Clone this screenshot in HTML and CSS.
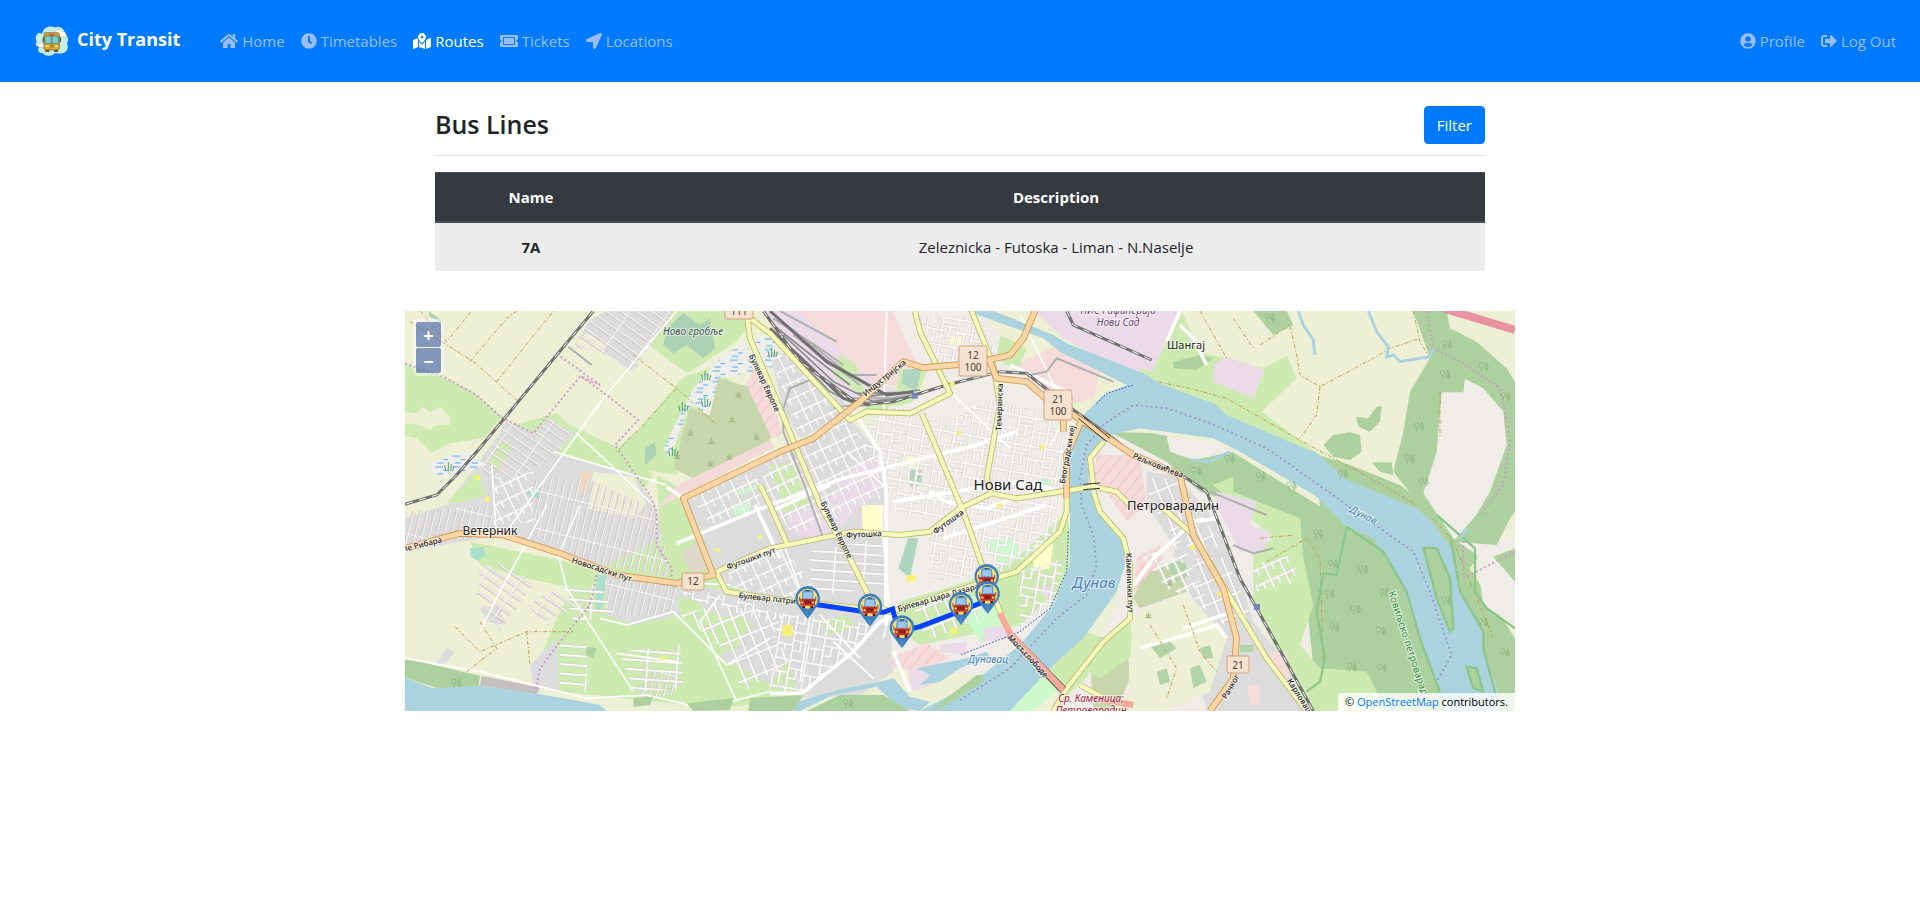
FILE: index.html
```html
<!DOCTYPE html>
<html lang="en">
<head>
<meta charset="utf-8">
<title>City Transit</title>
<link rel="stylesheet" href="styles.css">
</head>
<body>
<nav class="navbar">
  <a class="brand" href="#">
    <svg class="logo" viewBox="0 0 105 90" aria-hidden="true">
      <path fill="#c5ece5" d="M8 48C-1 28 14 14 24 24 28 4 46-2 62 4 76-2 92 8 92 22 104 32 104 44 99 52 106 66 98 80 84 82 72 84 66 80 62 82 54 92 34 92 26 82 12 82 8 66 18 62 6 62 2 56 8 48Z"/>
      <path fill="#fff" d="M62 20C64 8 80 6 84 16 94 16 98 24 97 32H64ZM10 60C8 54 20 48 28 54L34 64H16Z" stroke="#9a8578" stroke-width="1"/>
      <path fill="#5d5444" d="M26 34h4v14h-4zM77 34h4v14h-4zM34 68h12v10H34zM60 68h12v10H60z"/>
      <rect x="30" y="20" width="46" height="52" rx="5" fill="#d9a82f" stroke="#6b5a36" stroke-width="2"/>
      <path fill="#78cfd2" stroke="#55706b" stroke-width="2" d="M33 30h19v23H33zM54 30h19v23H54z"/>
      <path fill="#bf4a3c" d="M45 25h17v4H45z"/>
      <path fill="#f6dd73" d="M34 58h10v5H34zM62 58h10v5H62z"/>
      <path fill="#8c6a2b" d="M47 58h13v2H47zM47 62h13v2H47z"/>
    </svg>
    <span>City Transit</span>
  </a>
  <ul class="nav">
    <li><a class="nav-link" href="#"><svg class="icon wide" viewBox="0 0 576 512" aria-hidden="true"><path d="M280.37 148.26L96 300.11V464a16 16 0 0 0 16 16l112.06-.29a16 16 0 0 0 15.92-16V368a16 16 0 0 1 16-16h64a16 16 0 0 1 16 16v95.64a16 16 0 0 0 16 16.05L464 480a16 16 0 0 0 16-16V300L295.67 148.26a12.19 12.19 0 0 0-15.3 0zM571.6 251.47L488 182.56V44.05a12 12 0 0 0-12-12h-56a12 12 0 0 0-12 12v72.61L318.47 43a48 48 0 0 0-61 0L4.34 251.47a12 12 0 0 0-1.6 16.9l25.5 31A12 12 0 0 0 45.15 301l235.22-193.74a12.19 12.19 0 0 1 15.3 0L530.9 301a12 12 0 0 0 16.9-1.6l25.5-31a12 12 0 0 0-1.7-16.93z"/></svg>Home</a></li>
    <li><a class="nav-link" href="#"><svg class="icon" viewBox="0 0 512 512" aria-hidden="true"><path d="M256,8C119,8,8,119,8,256S119,504,256,504,504,393,504,256,393,8,256,8Zm92.49,313h0l-20,25a16,16,0,0,1-22.49,2.5h0l-67-49.72a40,40,0,0,1-15-31.23V112a16,16,0,0,1,16-16h32a16,16,0,0,1,16,16V256l58,42.5A16,16,0,0,1,348.49,321Z"/></svg>Timetables</a></li>
    <li><a class="nav-link active" href="#" aria-current="page"><svg class="icon wide" viewBox="0 0 576 512" aria-hidden="true"><path d="M288 0c-69.59 0-126 56.41-126 126 0 56.26 82.35 158.8 113.9 196.02 6.39 7.54 17.82 7.54 24.2 0C331.65 284.8 414 182.26 414 126 414 56.41 357.59 0 288 0zm0 168c-23.2 0-42-18.8-42-42s18.8-42 42-42 42 18.8 42 42-18.8 42-42 42zM20.12 215.95A32.006 32.006 0 0 0 0 245.66v250.32c0 11.32 11.43 19.06 21.94 14.86L160 448V214.92c-8.84-15.98-16.07-31.54-21.25-46.42L20.12 215.95zM288 359.67c-14.07 0-27.38-6.18-36.51-16.96-19.66-23.2-40.57-49.62-59.49-76.72v182l192 64V266c-18.92 27.09-39.82 53.52-59.49 76.72-9.13 10.77-22.44 16.95-36.51 16.95zm266.06-198.51L416 224v288l139.88-55.95A31.996 31.996 0 0 0 576 426.34V176.02c0-11.32-11.43-19.06-21.94-14.86z"/></svg>Routes</a></li>
    <li><a class="nav-link" href="#"><svg class="icon wide" viewBox="0 0 576 512" aria-hidden="true"><path d="M128 160h320v192H128V160zm400 96c0 26.51 21.49 48 48 48v96c0 26.51-21.49 48-48 48H48c-26.51 0-48-21.49-48-48v-96c26.51 0 48-21.49 48-48s-21.49-48-48-48v-96c0-26.51 21.49-48 48-48h480c26.51 0 48 21.49 48 48v96c-26.51 0-48 21.49-48 48zm-48-104c0-13.255-10.745-24-24-24H120c-13.255 0-24 10.745-24 24v208c0 13.255 10.745 24 24 24h336c13.255 0 24-10.745 24-24V152z"/></svg>Tickets</a></li>
    <li><a class="nav-link" href="#"><svg class="icon" viewBox="0 0 512 512" aria-hidden="true"><path d="M444.52 3.52L28.74 195.42c-47.97 22.39-31.98 92.75 19.19 92.75h175.91v175.91c0 51.17 70.36 67.17 92.75 19.19l191.9-415.78c15.99-38.39-25.59-79.97-63.97-63.97z"/></svg>Locations</a></li>
  </ul>
  <ul class="nav nav-end">
    <li><a class="nav-link" href="#"><svg class="icon" viewBox="0 0 496 512" aria-hidden="true"><path d="M248 8C111 8 0 119 0 256s111 248 248 248 248-111 248-248S385 8 248 8zm0 96c48.6 0 88 39.4 88 88s-39.4 88-88 88-88-39.4-88-88 39.4-88 88-88zm0 344c-58.7 0-111.3-26.6-146.5-68.2 18.8-35.4 55.6-59.8 98.5-59.8 2.4 0 4.8.4 7.1 1.1 13 4.2 26.6 6.9 40.9 6.9 14.3 0 28-2.7 40.9-6.9 2.3-.7 4.7-1.1 7.1-1.1 42.9 0 79.7 24.4 98.5 59.8C359.3 421.4 306.7 448 248 448z"/></svg>Profile</a></li>
    <li><a class="nav-link" href="#"><svg class="icon" viewBox="0 0 512 512" aria-hidden="true"><path d="M497 273L329 441c-15 15-41 4.5-41-17v-96H152c-13.3 0-24-10.7-24-24v-96c0-13.3 10.7-24 24-24h136V88c0-21.4 25.9-32 41-17l168 168c9.3 9.4 9.3 24.6 0 34zM192 436v-40c0-6.6-5.4-12-12-12H96c-17.7 0-32-14.3-32-32V160c0-17.7 14.3-32 32-32h84c6.6 0 12-5.4 12-12V76c0-6.6-5.4-12-12-12H96c-53 0-96 43-96 96v192c0 53 43 96 96 96h84c6.6 0 12-5.4 12-12z"/></svg>Log Out</a></li>
  </ul>
</nav>

<main class="container">
  <section class="lines">
    <header class="lines-head">
      <h1>Bus Lines</h1>
      <button class="btn" type="button">Filter</button>
    </header>
    <table class="table">
      <thead><tr><th class="col-name" scope="col">Name</th><th scope="col">Description</th></tr></thead>
      <tbody><tr><th scope="row">7A</th><td>Zeleznicka - Futoska - Liman - N.Naselje</td></tr></tbody>
    </table>
  </section>

  <section class="map" aria-label="Map">
    <svg class="map-canvas" viewBox="0 0 1110 400" preserveAspectRatio="xMidYMid slice">
      <defs>
        <pattern id="sA" width="21" height="110" patternUnits="userSpaceOnUse" patternTransform="rotate(14)"><path class="sc" d="M0 0H21M0 0V110M21 0V110"/><path class="st" d="M0 0H21M0 0V110"/></pattern>
        <pattern id="sB" width="26" height="96" patternUnits="userSpaceOnUse" patternTransform="rotate(-55)"><path class="sc" d="M0 0H26M0 0V96M26 0V96"/><path class="st" d="M0 0H26M0 0V96"/></pattern>
        <pattern id="sC" width="48" height="44" patternUnits="userSpaceOnUse" patternTransform="rotate(-25)"><path class="sc" d="M0 4H48M4 0V44M26 0V22"/><path class="st" d="M0 4H48M4 0V44M26 0V22"/></pattern>
        <pattern id="sD" width="90" height="28" patternUnits="userSpaceOnUse" patternTransform="rotate(4)"><path class="sc" d="M0 5H90M5 0V28"/><path class="st" d="M0 5H90M5 0V28"/></pattern>
        <pattern id="sE" width="92" height="84" patternUnits="userSpaceOnUse" patternTransform="rotate(10)"><path class="sc" d="M0 5H92M5 0V84M5 44H50M50 5V84M50 30H92M74 30V60H50M26 44V84"/><path class="st" d="M0 5H92M5 0V84M5 44H50M50 5V84M50 30H92M74 30V60H50M26 44V84"/></pattern>
        <pattern id="sF" width="62" height="34" patternUnits="userSpaceOnUse" patternTransform="rotate(68)"><path class="sc" d="M0 5H62M5 0V34"/><path class="st" d="M0 5H62M5 0V34"/></pattern>
        <pattern id="marsh" width="52" height="32" patternUnits="userSpaceOnUse"><path d="M2 6h22M26 16h14M8 26h18" fill="none" stroke="#4aa8f0" stroke-width="3"/></pattern>
        <pattern id="hatch" width="26" height="26" patternUnits="userSpaceOnUse" patternTransform="rotate(40)"><path d="M0 0V26" stroke="#f3aaaa" stroke-width="3"/></pattern>
        <g id="tree" fill="none" stroke="#86b07c" stroke-width="2"><path d="M-8 14V2M8 14V-6M2 6 8-14 14 6Z"/><circle cx="-8" cy="-5" r="7"/></g>
        <g id="shrub" fill="none" stroke="#a3b07f" stroke-width="3"><path d="M-10 8H10M0 8V-8M0 8-7-2M0 8 7-2"/></g>
        <g id="reed" fill="none" stroke="#4c9f6a" stroke-width="3"><path d="M-10 14-14-4M-3 14V-14M4 14 6-8M10 14 14-2"/></g>
        <g id="pin">
          <path fill="#3d7fc1" d="M0 0-31-42A37 37 0 1 1 31-42Z"/>
          <path d="M0-22V-4" stroke="#9cc6ea" stroke-width="2" stroke-dasharray="4 4"/>
          <circle cy="-61" r="30" fill="#ffdc6b"/>
          <path d="M-24-66v12M24-66v12" stroke="#4d5b69" stroke-width="3"/>
          <path fill="#6d1d1a" d="M-16-40h8v8h-8zM8-40h8v8H8z"/>
          <path fill="#5b9bd8" d="M-18-60-16-84Q0-92 16-84L18-60Z"/>
          <path fill="#9cc8ef" d="M-14-62-12-80H12L14-62Z"/>
          <path fill="#4d5b69" d="M-6-87H6v4H-6z"/>
          <path fill="#c4342b" d="M-22-60H22V-40H-22Z"/>
          <path fill="#8d211c" d="M-10-56H10V-45H-10Z"/>
          <path d="M-19-49h6M13-49h6" stroke="#ffe37a" stroke-width="5"/>
        </g>
      </defs>
      <rect width="1110" height="400" fill="#eef0d5"/>
      <g transform="translate(-5 -6) scale(.33333)">
        <!-- land cover -->
        <g>
          <path class="grass" d="M15 178 100 205 220 262 310 335 250 400 150 415 95 445 50 400 15 392Z"/>
          <path class="farm" d="M15 320 50 325 70 305 90 322 120 305 150 335V360H110L90 375 50 358H15Z"/>
          <path class="grass" d="M820 18H1030L1050 60 1010 110 860 205 745 120Z"/>
          <path fill="#add1b5" d="M85 18 125 45V52L90 36Z"/>
          <path class="grass" d="M930 190 1000 230 900 330 830 510 700 490 640 440 720 370 780 280 850 215ZM450 330 470 325 620 455 560 450Z"/>
          <path class="grass" d="M300 370 450 330 700 450 760 510 700 600 500 480Z"/>
          <path class="city" d="M570 45 620 18H820L700 205 620 150 520 125Z"/>
          <path class="farm" d="M560 85 620 120 575 185 505 125ZM800 18 745 120 860 205 930 190 850 215 720 370 700 300 620 260 700 190Z"/>
          <path class="city" d="M300 385 320 345 405 385 445 340 525 385 465 445 700 512 765 600 820 830 600 800 300 690 15 740V640L140 600 230 480Z"/>
          <path class="farm" d="M580 500 700 515 740 600 700 640 560 610Z"/>
          <path class="grass" d="M140 590 230 500 260 570 180 595ZM265 470 310 400 340 420 290 500ZM210 710 600 790 780 700 770 510 860 560 960 830 1110 890 1250 1080 1200 1180 960 1210 480 1160 410 1080 480 920 520 850 380 820 240 780Z"/>
          <path fill="#ddd8ca" d="M840 750 895 705 930 790 880 805Z"/>
          <path class="city" d="M390 1080 470 1000 480 1160 400 1145ZM820 830 1110 880 1200 1000 1110 1140 1050 1100 960 1060 1020 960 830 870ZM110 1075 140 1030 165 1040 130 1085ZM240 910 300 900 310 960 260 950ZM610 810 830 840 840 930 700 960 620 930Z"/>
          <path class="grass" d="M920 940 1020 930 1060 960 1000 1040 930 1010ZM830 880 880 880 960 960 940 1000 850 940Z"/>
          <path class="wood" d="M15 1060 240 1112 235 1145 120 1152 15 1118ZM560 1025 590 1030 580 1060 555 1050Z"/>
          <path fill="#c5c0c0" d="M245 1112 420 1148 410 1168 240 1142Z"/>
          <path class="marsh-base" d="M90 470 200 440 260 480 140 515 100 510ZM1040 110 1060 200 960 220 930 330 870 300 810 460 790 430 880 250 970 150ZM1070 90 1140 100 1130 190 1060 180Z"/>
          <path fill="url(#marsh)" d="M90 470 200 440 260 480 140 515 100 510ZM1040 110 1060 200 960 220 930 330 870 300 810 460 790 430 880 250 970 150ZM1070 90 1140 100 1130 190 1060 180Z"/>
          <path fill="#c8d7ab" d="M955 220 1045 245 1115 395 1090 430 900 530 820 490 870 310 930 330Z"/>
          <path fill="#add1b5" d="M800 70 850 25 900 60 930 40 945 130 910 160 860 120 820 145 790 120ZM735 430 765 410 770 450 735 480Z"/>
          <path fill="#f3d9d8" d="M835 540 1110 405 1125 425 860 565 770 610Z"/>
          <path fill="#aae0cb" d="M590 810H620L605 915H587ZM385 550 420 545V580L380 570ZM210 730 250 725 258 750 235 768 212 755ZM920 690 960 670 965 680 925 705Z"/>
          <path fill="#f5d7bb" d="M545 500 575 505 560 560 530 555Z"/>
          <path class="pink" d="M1040 240 1060 195 1110 240 1145 390 1115 400Z"/>
          <path fill="url(#hatch)" d="M1040 240 1060 195 1110 240 1145 390 1115 400Z"/>
          <path class="purple" d="M1090 18H1200L1420 230 1560 280 1540 300 1400 300 1250 210Z"/>
          <path class="pink" d="M1200 18H1545L1590 200 1520 250 1420 230Z"/>
          <path class="pale" d="M1480 18H1740L2010 330 1990 1100 1560 1110 1400 1000 1350 420 1580 250Z"/>
          <path class="city" d="M860 590 1140 430 1350 340 1460 470V800L1480 1100 1380 1170 1200 1180 1110 880 960 830Z"/>
          <path class="city" d="M1110 140 1200 150 1360 320 1200 400 1150 320Z"/>
          <path class="grass" d="M1110 480 1180 470 1240 600 1150 620ZM1320 150 1370 180 1400 280 1300 210ZM1500 190 1580 200 1560 250 1490 260ZM1370 340 1540 290 1560 260 1400 300ZM1260 950 1340 930 1370 970 1290 990Z"/>
          <path fill="#cdfacd" d="M990 600 1050 585 1050 625 1000 630ZM1000 565 1070 538 1075 550 1010 575Z"/>
          <path class="purple" d="M1370 480 1440 460V560L1370 610 1290 700 1180 690 1160 630 1280 590Z"/>
          <path class="pale" d="M1470 590 1900 500 2000 620 1960 800 1850 900 1500 920 1470 800Z"/>
          <path class="grass" d="M1500 890 1700 830 1850 760 2000 620 2015 700 1980 850 1860 960 1560 1020 1480 960Z"/>
          <path fill="#cdfacd" d="M1660 880 1780 870 1830 980 1740 1010 1690 930ZM1870 1110 1950 1060 1990 1140 1900 1218H1830ZM1750 710 1850 700 1860 760 1800 780ZM1910 525 1950 520 1955 545 1920 550Z"/>
          <path class="purple" d="M1750 970 1820 960 1820 1000 1750 1010ZM1620 1020 1700 1010V1050L1620 1040ZM1520 1090 1650 1070 1620 1130 1540 1160ZM1910 850 1980 840 1960 900Z"/>
          <path class="pink" d="M1470 1060 1580 1015 1650 1060 1560 1095 1480 1085Z"/>
          <path fill="url(#hatch)" d="M1470 1060 1580 1015 1650 1060 1560 1095 1480 1085Z"/>
          <path fill="#afd5be" d="M1525 698 1555 700 1530 820 1495 790ZM1530 495 1565 495V540L1530 545ZM1510 195 1565 190 1550 260 1505 235Z"/>
          <path fill="#ffffcc" d="M1385 600H1450V680L1390 700ZM1520 455H1570V480H1520ZM1650 95H1690V120H1650ZM1900 720 1960 710 1950 790 1900 800Z"/>
        </g>
        <!-- east side -->
        <path class="purple" d="M1900 18H2345L2255 210 2120 170 1990 100Z"/>
        <path class="grass" d="M2345 18 2255 200 2220 190V240L2400 300 2700 460 2760 450 2585 320 2690 220 2660 150 2590 190 2470 160 2400 140Z"/>
        <path class="wood" d="M2560 18H2660L2680 60 2620 90ZM2320 170 2400 150 2440 160 2390 195 2320 190Z"/>
        <path class="purple" d="M2440 180 2480 155 2595 195 2560 280 2440 230Z"/>
        <path class="pink" d="M1850 180 1990 110 2100 200 2080 280 2000 300 1890 230Z"/>
        <path class="grass" d="M1800 90 1880 130 1850 200 1790 160Z"/>
        <path class="wood" d="M2868 335 2905 340 2930 305 2945 303 2940 350 2910 380 2875 365ZM2770 420 2800 390 2850 382 2880 390 2885 440 2850 465 2800 455ZM2915 472H2975L2980 510 2940 500Z"/>
        <path class="wood" d="M3040 18H3140L3150 70 3230 110 3320 190 3345 230V620L3200 800 3060 600 2980 500 3010 380 3030 260 3090 160Z"/>
        <path class="wood" d="M2740 445 2850 480 3000 540 3080 600 3150 700 3345 1000V1218H2760L2750 1080 2770 680Z"/>
        <path class="pale" d="M3125 262H3190L3195 222 3250 250 3310 320 3320 420 3270 560 3200 680 3345 700V960L3250 900 3230 750 3160 700 3070 565 3110 440Z"/>
        <path class="wood" d="M3280 755 3345 730V830ZM3255 600 3345 500V610L3290 720 3160 710Z"/>
        <path class="pale" d="M2090 400 2300 380 2450 600 2740 700 2720 1218H1990L2150 900 2170 760 2060 560Z"/>
        <path class="wood" d="M2130 380 2260 385 2480 430 2560 480 2850 660 2840 700 2820 810 2770 800 2760 900 2780 1080 2740 1080 2720 900 2650 640 2400 560 2300 470Z"/>
        <path class="pale" d="M2300 395 2450 410 2500 440 2380 465 2310 440Z"/>
        <path class="grass" d="M2440 540 2500 515V560L2700 640 2710 760 2740 900 2700 1020 2760 1090 2900 1100 2960 1218H2720L2560 900 2560 740 2620 700Z"/>
        <path class="purple" d="M2450 560 2570 590 2550 660 2610 680 2590 740 2520 740 2450 600Z"/>
        <path class="city" d="M2240 500 2330 510 2440 640 2500 760 2560 950 2650 1060 2720 1218H2420L2340 860 2320 720 2240 600Z"/>
        <path fill="#c8d7ab" d="M2200 880 2240 790 2350 780 2360 860 2220 910ZM2070 1060 2180 1000 2190 1120 2150 1218H2080Z"/>
        <path class="grass" d="M2120 1000 2190 930 2200 1050 2100 1120 2050 1090Z"/>
        <path class="farm" d="M2200 930 2360 860 2480 1000 2430 1160 2300 1218H2180Z"/>
        <path fill="#b2d4a8" d="M2300 780 2350 765 2370 810 2330 830ZM2250 1020 2300 1000 2330 1030 2280 1060ZM2370 1090 2400 1080 2420 1130 2380 1150ZM2520 1020 2560 1020V1040H2520ZM2270 1100 2300 1090 2310 1130 2280 1140ZM2400 1030 2430 1020 2440 1060 2410 1060Z"/>
        <path class="pink" d="M2090 450 2220 450 2240 600 2180 650 2120 560 2080 520ZM2210 760 2280 720 2290 760 2200 860Z"/>
        <path fill="url(#hatch)" d="M2090 450 2220 450 2240 600 2180 650 2120 560 2080 520ZM2210 760 2280 720 2290 760 2200 860Z"/>
        <path fill="#f5dcdb" d="M2610 1040 2660 1040 2670 1120 2620 1100ZM2540 1140H2580V1200H2550Z"/>
        <path class="grass" d="M2020 640 2010 800 1960 940 2050 980 2120 1000 2060 1120 1990 1180 1900 1080Z"/>

        <!-- street grids -->
        <path fill="url(#sB)" d="M570 45 620 18H820L700 205 620 150 520 125ZM320 345 405 385 445 340 525 385 460 460 320 540 240 500ZM240 780 340 780 400 840 300 980 230 880ZM380 900 470 850 560 900 430 950Z"/>
        <path fill="url(#sA)" d="M400 520 560 520 760 610 820 820 600 780 400 690ZM615 820 830 840 820 930 620 930ZM15 620 290 600 290 690 15 730ZM720 1110 830 1090 830 1170 720 1180Z"/>
        <path fill="url(#sC)" d="M280 520 400 500 400 650 280 660ZM1110 430 1150 420 1340 350 1460 480 1440 590 1180 690 1080 560ZM1110 150 1200 150 1350 310 1200 400ZM980 780 1140 720 1250 850 1180 880 1000 850ZM2230 760 2340 700 2430 900 2300 850ZM2560 780 2680 750 2700 830 2570 860ZM870 570 1060 500 1110 600 930 660Z"/>
        <path fill="url(#sD)" d="M480 1010H560V1160H480ZM1230 740 1450 700 1460 850 1230 870ZM490 840 600 840 640 930 520 950ZM660 1040 840 1020 850 1150 700 1160Z"/>
        <path fill="url(#sE)" d="M1480 300 1640 350 1770 280 1960 330 2000 420 1980 600 1800 640 1500 640 1400 420 1400 340ZM1560 40 1740 30 1790 150 1590 190ZM1120 920 1440 960 1220 1160 1110 1160ZM1580 700 1750 620 1960 600 1980 700 1800 800 1600 830ZM1860 800 1990 760 1960 920 1860 980ZM830 840 1100 900 1110 950 860 880Z"/>
        <path fill="url(#sF)" d="M950 900 1150 930 1110 1000 1180 1060 1030 1160 960 1020 840 930ZM1540 900 1720 840 1780 920 1580 1010ZM2240 520 2340 520 2460 720 2400 760 2320 690 2250 600ZM2370 760 2480 760 2560 950 2500 980 2400 900Z"/>
        <path class="st" d="M830 18 610 280 320 680M530 385 760 600M460 440 800 540M275 480 290 700M440 600 300 860 240 980M540 600 475 750 500 850 700 1160M15 1060 240 1100 560 1180 740 1170 910 1210 1110 1160M830 1070 650 1045M600 940 680 960 820 920 980 1080 1110 1000M1440 600 1470 920 1450 1000M1340 440 1460 550M1450 350 1460 18M1640 250 1830 430M1860 30 1990 300M1990 350 1950 420M1155 725 1230 940 1200 1130M1260 930 1380 1060M1300 1010 1420 1120M990 840 820 830M960 870 900 950 1010 1190"/>
        <path class="road" d="M830 715 1060 620 1110 600 1330 520 1730 420 1850 380M1630 700 1940 600M1200 1170 1360 1040 1440 950 1478 935M1830 180 2020 270M2340 18 2300 110M1458 960V550L1440 440 1355 310M1065 600 1140 760M2180 870 2260 760 2380 650 2450 640M2220 1030 2390 980 2450 960 2480 1000M1590 560 1640 590 1760 610 1900 560M1110 620 1290 540M1480 590 1850 530 1975 560M1480 1040 1530 1160M2420 180 2380 100 2340 60M2350 970 2500 920M800 545 850 580M1110 1165H1200"/>
        <!-- forest lanes and footpaths -->
        <path class="track" d="M30 50 220 170 350 285M60 18 140 110 215 18M210 170 320 40 350 18M290 230 460 18M700 150 830 250 720 370 650 440M830 250 950 360M165 965 240 1040 380 980 520 980M380 980 390 1080M200 1100 290 1030 240 950M2220 220 2370 250 2480 280 2690 400 2930 530 3050 600M2400 18 2480 160M2500 40 2560 130M2580 120 2670 60 2690 150 2700 210 2760 245 2920 160 2970 130 3060 100M2760 245 2750 330 2700 400M3040 18 3060 110 3090 160M3120 260V400M2600 770 2720 700 2760 760 2770 1080M3100 640 3160 710 3280 1000M2580 700 2680 690M2250 960 2330 1090 2300 1180M2350 900 2400 1040 2450 1100"/>
        <path class="boundary" d="M15 175 130 215 230 270 300 335 400 385 540 215 600 240 475 150M545 215 620 270 715 345 645 420 700 500 750 570 770 620 770 720 815 790 815 835 700 825M590 810 570 900 480 1010 420 1090 395 1210M15 1215H170"/>
        <g transform="translate(2220)"><path class="boundary" d="M860 18 880 130 980 180 1080 250 1110 400 1090 540 1020 630"/></g>
        <g transform="translate(2220 600)"><path class="boundary" d="M970 80V220L1125 140"/></g>

        <!-- water -->
        <path class="water" d="M1700 18H1780L1960 90 2000 115 2230 205 2290 240 2440 295 2480 330 2750 445 2840 525 3050 610 3100 655 3160 740 3180 860 3250 980 3250 1030 3295 1160V1218H3135L3120 1170 3060 1000 3010 850 2920 700 2840 665 2750 575 2520 440 2440 400 2220 370 2130 390 2070 450 2065 530 2090 610 2170 690 2175 780 2150 860 2050 1000 1960 1080 1830 1218H1560L1710 1140 1860 1020 1960 900 2010 780 2010 600 2000 520 2010 410 2050 330 2110 270 2180 240 1980 140 1930 100Z"/>
        <path class="water" d="M15 1118 100 1150 240 1142 420 1168 520 1185 600 1200 620 1218H15ZM1110 1215 1260 1170 1340 1150 1440 1130 1480 1120 1530 1175 1590 1190 1560 1218 1500 1210 1430 1145 1300 1170 1200 1218ZM1550 1090 1700 1060 1760 1040 1770 1060 1680 1090 1620 1130 1560 1140 1590 1110Z"/>
        <path class="wood" d="M1220 1218 1320 1170 1450 1170 1530 1218ZM1590 1218 1730 1110 1750 1110 1750 1130 1640 1200ZM700 1180 760 1175 750 1200 700 1205ZM860 1195 1000 1180 990 1215 880 1218ZM1050 1180 1210 1170 1180 1218H1045Z"/>
        <path d="M2840 665 2810 810 2770 805 2750 920 2775 1060 2760 1130 2720 1160M2840 665 2950 740 3020 860 3060 1000 3140 1218M3345 970 3260 910 3225 860V730L3110 630M3150 690 3180 860 3250 980V1030L3300 1218" fill="none" stroke="#8cc68a" stroke-width="7"/>
        <path d="M3070 728 3110 730 3150 820 3160 970 3150 980 3110 880ZM3200 1085 3230 1090 3250 1160 3220 1150Z" fill="#add19e" stroke="#8cc68a" stroke-width="7"/>
        <path class="stream" d="M2695 18 2710 60 2740 105 2745 150M2905 18 2930 80 2965 125 2960 155 2980 150 3000 170 3090 155 3100 130M2375 465 2430 470 2490 440M3180 700 3200 670"/>
        <path d="M1680 1185 1830 1090 1970 940 2060 870 2090 780 2080 690 2045 600 2040 520 2060 420 2110 360 2200 300 2300 310 2420 350 2600 430 2700 500 2840 600 3040 740 3090 860 3155 1050 3110 1130" class="ferry"/>
        <path d="M2090 295 2120 265 2200 240M2005 680 2000 800 1950 910 1860 980 1680 1050" fill="none" stroke="#3c46d8" stroke-width="3" stroke-dasharray="5 5"/>

        <!-- rail -->
        <g fill="none">
          <path stroke="#b0b0b0" stroke-width="6" d="M1120 40 1260 130 1330 180M1140 18 1310 110M1160 60 1350 210 1430 210M1180 90 1380 240M1300 310 1530 270M1350 280 1480 280M1230 225 1170 250 1150 310V380L1220 560 1270 700M1890 210 1940 200 1970 160 2140 230M2430 560 2600 630M2500 720 2560 745 2620 730M505 125 575 180"/>
          <path stroke="#8a8a8a" stroke-width="5" d="M1120 60 1220 140 1350 240M1150 90 1300 230 1420 290 1540 275M1130 100 1290 260 1360 295M1370 265 1540 262M1400 275 1560 255"/>
          <path class="rail" d="M580 18 470 150 330 320 230 440 170 510 110 570 15 598M1090 18 1200 170 1380 300 1480 290 1640 240 1800 200 1880 205 2000 300 2140 400 2200 450 2360 520 2420 560 2520 820 2620 1000 2740 1218M1110 70 1330 280 1410 300M1110 18 1280 170 1460 270 1540 260M2000 18 2020 60 2255 165"/>
          <path class="rail-dash" d="M580 18 470 150 330 320 230 440 170 510 110 570 15 598M1090 18 1200 170 1380 300 1480 290 1640 240 1800 200 1880 205 2000 300 2140 400 2200 450 2360 520 2420 560 2520 820 2620 1000 2740 1218M2000 18 2020 60 2255 165"/>
        </g>
        <!-- main roads -->
        <g fill="none" stroke-linejoin="round">
          <path stroke="#b5ba70" stroke-width="18" d="M1040 18 1050 100 1140 310 1260 600 1350 760 1420 900 1470 920M1050 40 1110 85 1350 345 1400 320 1530 325 1650 265 1560 80 1545 18M1565 325 1690 620 1760 820 1805 930M1715 18 1780 180 1800 300 1760 520 1775 565 1680 610 1590 680 1500 690 1360 680 1110 730 950 800M1080 540 1110 600 1165 725M950 805 980 860 1110 880 1470 920 1850 800 1980 680 2000 620 2000 560M1775 565 1850 580 2080 545 2150 560 2190 600M2080 545 2070 460 2110 410M2080 560 2100 620 2170 700 2190 780V940L2110 1010 2000 1150 1960 1218M2290 610 2380 690 2480 860 2600 1060 2720 1218M2040 1140 2180 1218"/>
          <path stroke="#f5f8b8" stroke-width="13" d="M1040 18 1050 100 1140 310 1260 600 1350 760 1420 900 1470 920M1050 40 1110 85 1350 345 1400 320 1530 325 1650 265 1560 80 1545 18M1565 325 1690 620 1760 820 1805 930M1715 18 1780 180 1800 300 1760 520 1775 565 1680 610 1590 680 1500 690 1360 680 1110 730 950 800M1080 540 1110 600 1165 725M950 805 980 860 1110 880 1470 920 1850 800 1980 680 2000 620 2000 560M1775 565 1850 580 2080 545 2150 560 2190 600M2080 545 2070 460 2110 410M2080 560 2100 620 2170 700 2190 780V940L2110 1010 2000 1150 1960 1218M2290 610 2380 690 2480 860 2600 1060 2720 1218M2040 1140 2180 1218"/>
          <path stroke="#d0954f" stroke-width="20" d="M15 730 180 685 310 690 480 745 650 810 830 835 940 810 850 580 1140 440 1240 400 1380 290 1510 170 1570 188 1720 175 1830 150 1870 100 1905 18M1770 170 1790 220 1880 230 1960 300 2020 330 2200 450 2340 510 2380 690 2470 850 2510 1000 2500 1120 2430 1218M2045 345 2000 450V580M1990 330V380"/>
          <path stroke="#fcd6a4" stroke-width="15" d="M15 730 180 685 310 690 480 745 650 810 830 835 940 810 850 580 1140 440 1240 400 1380 290 1510 170 1570 188 1720 175 1830 150 1870 100 1905 18M1770 170 1790 220 1880 230 1960 300 2020 330 2200 450 2340 510 2380 690 2470 850 2510 1000 2500 1120 2430 1218M2045 345 2000 450V580M1990 330V380"/>
          <path stroke="#4b4b4b" stroke-width="24" d="M1830 990 1990 1155"/>
          <path stroke="#f5a99a" stroke-width="19" d="M1800 925 1830 985 1990 1155M2080 1180 2200 1200"/>
          <path stroke="#e892a2" stroke-width="24" d="M3130 10 3345 75"/>
          <path stroke="#333" stroke-width="3" d="M2045 330 2130 400M2035 340 2120 410M2050 538 2100 534M2050 554 2100 550"/>
        </g>
        <path fill="#7486b8" d="M1535 263h18v18h-18zM2562 897h18v18h-18z"/>
        <path fill="#f5f27a" d="M225 510h16v16h-16zM255 575h14v16h-14zM782 1052h14v14h-14zM2370 720h14v14h-14zM2452 860h12v12h-12zM945 730h16v10h-16zM1075 690h12v12h-12zM1650 230h14v14h-14zM1670 378h14v12h-14zM1790 595h14v14h-14zM1148 960h30v34h-30zM1520 810h28v20h-28zM1650 970h22v16h-22zM1920 420h16v12h-16z"/>
        <g><use href="#tree" x="170" y="1135"/><use href="#tree" x="1345" y="1195"/><use href="#tree" x="3142" y="120"/><use href="#tree" x="3136" y="208"/><use href="#tree" x="3252" y="185"/><use href="#tree" x="3318" y="275"/><use href="#tree" x="3058" y="366"/><use href="#tree" x="3030" y="462"/><use href="#tree" x="3072" y="530"/><use href="#tree" x="2390" y="498"/><use href="#tree" x="2583" y="515"/><use href="#tree" x="2830" y="508"/><use href="#tree" x="2675" y="543"/><use href="#tree" x="2755" y="686"/><use href="#tree" x="2800" y="778"/><use href="#tree" x="2890" y="794"/><use href="#tree" x="2790" y="868"/><use href="#tree" x="2953" y="864"/><use href="#tree" x="2868" y="914"/><use href="#tree" x="2805" y="968"/><use href="#tree" x="2943" y="978"/><use href="#tree" x="2856" y="1087"/><use href="#tree" x="2946" y="1089"/><use href="#tree" x="3250" y="953"/><use href="#tree" x="3315" y="1043"/><use href="#tree" x="3140" y="888"/><use href="#tree" x="2490" y="463"/><use href="#tree" x="2610" y="38"/></g>
        <g><use href="#shrub" x="1015" y="268"/><use href="#shrub" x="996" y="342"/><use href="#shrub" x="871" y="382"/><use href="#shrub" x="934" y="408"/><use href="#shrub" x="1069" y="394"/><use href="#shrub" x="988" y="454"/><use href="#shrub" x="931" y="474"/><use href="#shrub" x="832" y="452"/><use href="#shrub" x="2308" y="832"/><use href="#shrub" x="2245" y="930"/></g>
        <g><use href="#reed" x="148" y="485"/><use href="#reed" x="918" y="290"/><use href="#reed" x="918" y="212"/><use href="#reed" x="850" y="305"/><use href="#reed" x="1118" y="142"/><use href="#reed" x="820" y="440"/></g>
        <path d="M1223 895 1380 918 1450 922 1478 912 1488 950 1508 978 1560 965 1683 918 1763 885 1760 830" fill="none" stroke="#0042ff" stroke-width="15"/>
      </g>

      <g class="shields">
        <rect x="320" y="-10" width="28" height="18" rx="2"/><rect x="554" y="35" width="28" height="30" rx="2"/><rect x="639" y="79" width="28" height="30" rx="2"/><rect x="277" y="262" width="22" height="17" rx="2"/><rect x="822" y="345" width="22" height="17" rx="2"/>
        <g><text x="334" y="4">111</text><text x="568" y="48">12</text><text x="568" y="60">100</text><text x="653" y="92">21</text><text x="653" y="104">100</text><text x="288" y="274">12</text><text x="833" y="358">21</text></g>
      </g>
      <g class="labels">
        <text class="t10 it cem" x="288" y="24">Ново гробље</text>
        <text class="t12" x="85" y="224">Ветерник</text>
        <text class="t15" x="603" y="179">Нови Сад</text>
        <text class="t13" x="768" y="199">Петроварадин</text>
        <text class="t11" x="781" y="38">Шангај</text>
        <text class="t10 it ind" x="713" y="3">НИС Рафинерија</text>
        <text class="t10 it ind" x="713" y="15">Нови Сад</text>
        <text class="t15 it riv" x="689" y="277">Дунав</text>
        <text class="t10 it riv" transform="translate(957 207) rotate(27)">Дунав</text>
        <text class="t10 it riv" x="583" y="352">Дунавац</text>
        <text class="t10 it toll" x="686" y="391">Ср. Каменица;</text>
        <text class="t10 it toll" x="686" y="403">Петроварадин</text>
        <text class="t8" transform="translate(357 73) rotate(65)">Булевар Европе</text>
        <text class="t8" transform="translate(429 220) rotate(64)">Булевар Европе</text>
        <text class="t8" transform="translate(481 69) rotate(-39)">Индустријска</text>
        <text class="t8" transform="translate(597 96) rotate(-88)">Темеринска</text>
        <text class="t8" transform="translate(665 144) rotate(-80)">Београдски кеј</text>
        <text class="t8" transform="translate(752 157) rotate(22)">Рељковићева</text>
        <text class="t8" transform="translate(459 226) rotate(-3)">Футошка</text>
        <text class="t8" transform="translate(545 213) rotate(-36)">Футошка</text>
        <text class="t8" transform="translate(347 250) rotate(-20)">Футошки пут</text>
        <text class="t8" transform="translate(196 261) rotate(18)">Новосадски пут</text>
        <text class="t8" transform="translate(18 236) rotate(-14)">ле Рибара</text>
        <text class="t8" transform="translate(362 290) rotate(6)">Булевар патри</text>
        <text class="t8" transform="translate(534 289) rotate(-16)">Булевар Цара Лазара</text>
        <text class="t8" transform="translate(621 347) rotate(47)">Мост слободе</text>
        <text class="t8" transform="translate(722 272) rotate(88)">Каменички пут</text>
        <text class="t8" transform="translate(892 386) rotate(58)">Карловац</text>
        <text class="t8" transform="translate(828 377) rotate(-60)">Рачког</text>
        <text class="t10 park" transform="translate(1000 333) rotate(72)">Ковиљско-петроварад</text>
      </g>
      <g transform="translate(-5 -6) scale(.33333)">
        <use href="#pin" x="1760" y="876"/><use href="#pin" x="1223" y="942"/><use href="#pin" x="1410" y="965"/><use href="#pin" x="1683" y="960"/><use href="#pin" x="1763" y="927"/><use href="#pin" x="1506" y="1030"/>
      </g>
    </svg>
    <div class="zoom">
      <button type="button" aria-label="Zoom in">+</button>
      <button type="button" aria-label="Zoom out">−</button>
    </div>
    <p class="attribution">© <a href="#">OpenStreetMap</a> contributors.</p>
  </section>
</main>
</body>
</html>
```
FILE: styles.css
```css
* { box-sizing: border-box; }
body { margin: 0; background: #fff; color: #212529; font-family: "Open Sans", "Noto Sans", sans-serif; font-size: 15px; line-height: 24px; }

.navbar { display: flex; align-items: center; min-height: 82px; padding: 8px 16px; background: #007bff; }
.brand { display: flex; align-items: center; gap: 8px; margin: 0 32px 4px 18px; color: #fff; font-size: 18px; font-weight: 700; line-height: 30px; text-decoration: none; }
.logo { width: 35px; height: 30px; margin-top: 4px; }
.nav { display: flex; margin: 0; padding: 0; list-style: none; }
.nav-end { margin-left: auto; }
.nav-link { display: flex; align-items: center; gap: 4px; padding: 8px; color: #9abdff; text-decoration: none; }
.nav-link.active { color: #fff; }
.icon { width: 16px; height: 16px; fill: currentColor; }
.icon.wide { width: 18px; }

.container { width: 100%; max-width: 1140px; margin: 0 auto; padding: 0 15px; }
.lines { padding: 24px 30px 0; }
.lines-head { display: flex; align-items: flex-start; justify-content: space-between; padding-bottom: 11px; margin-bottom: 16px; border-bottom: 1px solid #e5e5e5; }
h1 { margin: 0; font-size: 25px; font-weight: 600; line-height: 36px; }
.btn { height: 38px; padding: 6px 12px; border: 1px solid #007bff; border-radius: 4px; background: #007bff; color: #fff; font: inherit; cursor: pointer; }

.table { width: 100%; border-collapse: collapse; text-align: center; }
.table th, .table td { padding: 12px; }
.table th { font-weight: 700; }
.table thead th { border-top: 1px solid #454d55; border-bottom: 2px solid #454d55; background: #343a40; color: #fff; }
.table tbody tr { background: #ececec; }
.col-name { width: 192px; }

.map { position: relative; height: 400px; margin-top: 40px; overflow: hidden; }
.map-canvas { display: block; width: 100%; height: 100%; font-family: "Noto Sans", sans-serif; }
.zoom { position: absolute; top: 8px; left: 8px; display: flex; flex-direction: column; gap: 1px; padding: 3px; border-radius: 4px; background: rgba(255, 255, 255, .4); }
.zoom button { width: 25px; height: 25px; padding: 0; border: 0; border-radius: 2px; background: rgba(18, 56, 144, .5); color: #fff; font: 700 18px/24px "Open Sans", sans-serif; cursor: pointer; }
.attribution { position: absolute; right: 0; bottom: 0; margin: 0; padding: 0 7px; border-radius: 4px 0 0; background: rgba(255, 255, 255, .8); color: #000; font-size: 11px; line-height: 18px; }
.attribution a { color: #007bff; text-decoration: none; }

.grass { fill: #cdebb0; }
.wood { fill: #add19e; }
.farm { fill: #eef0d5; }
.city { fill: #dddcdc; }
.pale { fill: #f0ede8; }
.pink { fill: #f5dcdb; }
.purple { fill: #ebdbe8; }
.marsh-base { fill: #f0eeea; }
.water { fill: #aad3df; }
.stream { fill: none; stroke: #aad3df; stroke-width: 9; }
.sc { fill: none; stroke: #d2cdca; stroke-width: 9; }
.st { fill: none; stroke: #fff; stroke-width: 5; }
.road { fill: none; stroke: #fff; stroke-width: 11; }
.track { fill: none; stroke: #bf9f50; stroke-width: 3; stroke-dasharray: 12 6 4 6; }
.boundary { fill: none; stroke: #cf9bcb; stroke-width: 6; stroke-dasharray: 6 8; }
.ferry { fill: none; stroke: #9c85c9; stroke-width: 5; stroke-dasharray: 5 10; }
.rail { stroke: #707070; stroke-width: 9; }
.rail-dash { stroke: #fff; stroke-width: 3; stroke-dasharray: 20 20; }
.shields rect { fill: #f5e3cf; stroke: #d3a37c; }
.shields text { fill: #4d4032; font-size: 10px; text-anchor: middle; }
.labels text { fill: #222; stroke: rgba(255, 255, 255, .6); stroke-width: 2px; paint-order: stroke; text-anchor: middle; }
.labels .t8 { font-size: 8px; font-weight: 500; }
.labels .t10 { font-size: 10px; }
.labels .t11 { font-size: 11px; }
.labels .t12 { font-size: 12px; }
.labels .t13 { font-size: 13px; }
.labels .t15 { font-size: 15px; }
.labels .it { font-style: italic; }
.labels .cem { fill: #3d5145; }
.labels .ind { fill: #6f4575; }
.labels .riv { fill: #4a7fb5; }
.labels .toll { fill: #a3203a; }
.labels .park { fill: #2f8a3c; }
```
